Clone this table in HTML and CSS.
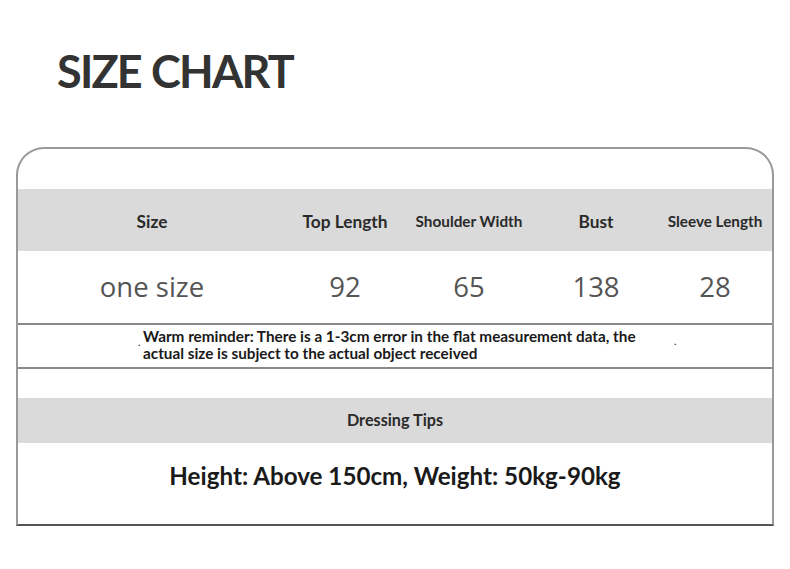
FILE: index.html
```html
<!DOCTYPE html>
<html>
<head>
<meta charset="utf-8">
<link rel="stylesheet" href="styles.css">
</head>
<body>
<div class="page">
  <h1 class="title">SIZE CHART</h1>
  <div class="chart">
    <div class="top-gap"></div>
    <div class="row head">
      <div class="cell big">Size</div>
      <div class="cell big">Top Length</div>
      <div class="cell">Shoulder Width</div>
      <div class="cell big">Bust</div>
      <div class="cell">Sleeve Length</div>
    </div>
    <div class="row values">
      <div class="cell">one size</div>
      <div class="cell">92</div>
      <div class="cell">65</div>
      <div class="cell">138</div>
      <div class="cell">28</div>
    </div>
    <div class="reminder">
      <span class="dot dot-l">.</span>
      <p>Warm reminder: There is a 1-3cm error in the flat measurement data, the<br>actual size is subject to the actual object received</p>
      <span class="dot dot-r">.</span>
    </div>
    <div class="mid-gap"></div>
    <div class="tips-head">Dressing Tips</div>
    <div class="tips-body">Height: Above 150cm, Weight: 50kg-90kg</div>
  </div>
</div>
</body>
</html>
```

FILE: styles.css
```css
* { box-sizing: border-box; }
html, body { margin: 0; padding: 0; background: #fff; }
body { font-family: Lato, "Open Sans", sans-serif; width: 790px; height: 569px; overflow: hidden; }
.page { padding: 0 16px 0 16px; }
.title {
  margin: 0;
  padding: 46px 0 0 41px;
  height: 147px;
  font-family: Lato, sans-serif;
  font-weight: 700;
  font-size: 45px;
  line-height: 50px;
  color: #333;
  letter-spacing: -1.8px;
  word-spacing: 1px;
}
.chart {
  width: 758px;
  height: 379px;
  border: 2px solid #999;
  border-bottom-color: #555;
  border-radius: 28px 28px 0 0;
  display: flex;
  flex-direction: column;
}
.top-gap { height: 40px; }
.row {
  display: grid;
  grid-template-columns: 268px 118px 130px 124px 114px;
  align-items: center;
  text-align: center;
}
.head { height: 62px; background: #dadada; color: #2a2a2a; font-weight: 700; font-size: 15.3px; }
.head .big { font-size: 17.3px; }
.head .cell { padding-top: 2px; }
.values {
  height: 74px;
  border-bottom: 2px solid #8a8a8a;
  font-family: "Open Sans", sans-serif;
  font-weight: 400;
  font-size: 27.5px;
  color: #555;
}
.values .cell { padding-bottom: 2px; }
.reminder {
  height: 44px;
  border-bottom: 2px solid #8a8a8a;
  position: relative;
  padding: 3px 0 0 125px;
}
.reminder p {
  margin: 0;
  font-weight: 700;
  font-size: 15.3px;
  line-height: 16.5px;
  color: #1a1a1a;
}
.dot { position: absolute; font-size: 10px; color: #333; font-weight: 700; }
.dot-l { left: 120px; top: 11px; }
.dot-r { left: 656px; top: 10px; }
.mid-gap { height: 29px; }
.tips-head {
  height: 45px;
  background: #dadada;
  display: flex;
  align-items: center;
  justify-content: center;
  padding-bottom: 3px;
  font-weight: 700;
  font-size: 16.2px;
  color: #2a2a2a;
}
.tips-body {
  flex: 1;
  display: flex;
  align-items: center;
  justify-content: center;
  padding-bottom: 16px;
  font-weight: 700;
  font-size: 24.2px;
  color: #1a1a1a;
}
```
